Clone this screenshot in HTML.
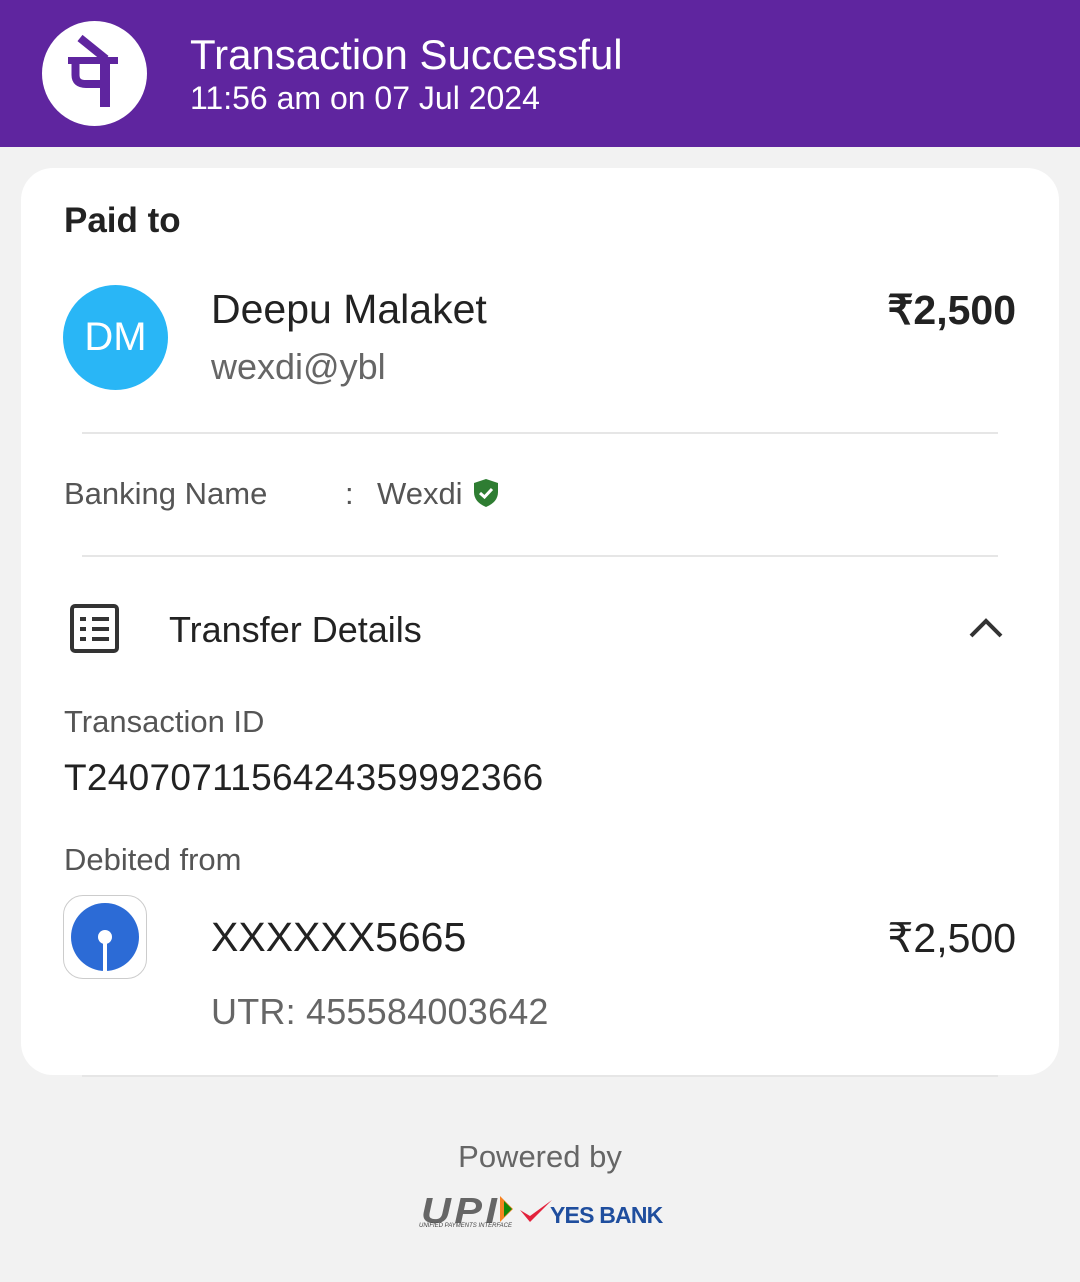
<!DOCTYPE html>
<html><head><meta charset="utf-8"><style>
body{margin:0;width:1080px;height:1282px;background:#f2f2f2;font-family:"Liberation Sans",sans-serif;position:relative;overflow:hidden}
.a{position:absolute;white-space:nowrap}
</style></head><body>
<div class="a" style="left:0;top:0;width:1080px;height:147px;background:#5f259f"></div>
<div class="a" style="left:42px;top:21px;width:105px;height:105px;border-radius:50%;background:#fff"></div>
<svg class="a" style="left:42px;top:21px" width="105" height="105" viewBox="0 0 105 105">
<path d="M38 17 L64 38" stroke="#5f259f" stroke-width="8" fill="none"/>
<rect x="26" y="36" width="50" height="7" fill="#5f259f"/>
<path d="M33.5 42 V54 Q33.5 63 44 63 H62" stroke="#5f259f" stroke-width="8" fill="none"/>
<rect x="58" y="40" width="10" height="46" fill="#5f259f"/>
</svg>
<div class="a" style="left:190px;top:31px;font-size:42px;color:#fff">Transaction Successful</div>
<div class="a" style="left:190px;top:80px;font-size:32px;color:#fff">11:56 am on 07 Jul 2024</div>

<div class="a" style="left:21px;top:168px;width:1038px;height:907px;background:#fff;border-radius:32px"></div>
<div class="a" style="left:64px;top:201px;font-size:35px;font-weight:bold;color:#222">Paid to</div>
<div class="a" style="left:63px;top:285px;width:105px;height:105px;border-radius:50%;background:#29b6f6;color:#fff;font-size:40px;line-height:105px;text-align:center">DM</div>
<div class="a" style="left:211px;top:286px;font-size:41px;color:#222">Deepu Malaket</div>
<div class="a" style="left:211px;top:346px;font-size:36px;color:#666">wexdi@ybl</div>
<div class="a" style="right:64px;top:286px;font-size:41px;font-weight:bold;color:#222">₹2,500</div>
<div class="a" style="left:82px;top:432px;width:916px;height:2px;background:#e6e6e6"></div>
<div class="a" style="left:64px;top:476px;font-size:31px;color:#555">Banking Name</div>
<div class="a" style="left:345px;top:476px;font-size:31px;color:#555">:</div>
<div class="a" style="left:377px;top:476px;font-size:31px;color:#555">Wexdi</div>
<svg class="a" style="left:472px;top:478px" width="28" height="30" viewBox="0 0 28 30"><path d="M14 1 L26 5 V14 Q26 24 14 29 Q2 24 2 14 V5 Z" fill="#2e7d32"/><path d="M8 15 L12.5 19 L20 11" stroke="#fff" stroke-width="3" fill="none"/></svg>
<div class="a" style="left:82px;top:555px;width:916px;height:2px;background:#e6e6e6"></div>
<svg class="a" style="left:70px;top:604px" width="49" height="49" viewBox="0 0 49 49"><rect x="2" y="2" width="45" height="45" rx="3" fill="none" stroke="#333" stroke-width="4"/><g fill="#333"><rect x="10" y="13" width="6" height="4"/><rect x="22" y="13" width="17" height="4"/><rect x="10" y="23" width="6" height="4"/><rect x="22" y="23" width="17" height="4"/><rect x="10" y="33" width="6" height="4"/><rect x="22" y="33" width="17" height="4"/></g></svg>
<div class="a" style="left:169px;top:609px;font-size:36px;color:#222">Transfer Details</div>
<svg class="a" style="left:968px;top:616px" width="36" height="24" viewBox="0 0 36 24"><path d="M3 20 L18 5 L33 20" stroke="#333" stroke-width="4" fill="none"/></svg>
<div class="a" style="left:64px;top:704px;font-size:31px;color:#555">Transaction ID</div>
<div class="a" style="left:64px;top:757px;font-size:37px;color:#222;letter-spacing:0.3px">T2407071156424359992366</div>
<div class="a" style="left:64px;top:842px;font-size:31px;color:#555">Debited from</div>
<div class="a" style="left:63px;top:895px;width:82px;height:82px;border:1px solid #ccc;border-radius:20px;background:#fff"></div>
<svg class="a" style="left:69px;top:901px" width="72" height="72" viewBox="0 0 72 72"><circle cx="36" cy="36" r="34" fill="#2c6bd6"/><circle cx="36" cy="36" r="7" fill="#fff"/><rect x="34" y="38" width="4" height="34" fill="#fff"/></svg>
<div class="a" style="left:211px;top:914px;font-size:41px;color:#222">XXXXXX5665</div>
<div class="a" style="right:64px;top:914px;font-size:41px;color:#222">₹2,500</div>
<div class="a" style="left:211px;top:991px;font-size:36px;color:#666;letter-spacing:0.2px">UTR: 455584003642</div>
<div class="a" style="left:82px;top:1075px;width:916px;height:2px;background:#e6e6e6"></div>
<div class="a" style="left:0;width:1080px;text-align:center;top:1139px;font-size:31px;color:#666">Powered by</div>
<div class="a" style="left:421px;top:1190px;font-size:36px;font-style:italic;font-weight:bold;color:#666;letter-spacing:3px;transform:scaleX(1.15);transform-origin:left">UPI</div>
<svg class="a" style="left:498px;top:1196px" width="16" height="26" viewBox="0 0 16 26"><path d="M2 0 L15 13 L2 26Z" fill="#f58220"/><path d="M6 5 L14 13 L6 21Z" fill="#138808"/></svg>
<div class="a" style="left:419px;top:1223px;font-size:6px;font-style:italic;color:#444">UNIFIED PAYMENTS INTERFACE</div>
<svg class="a" style="left:518px;top:1198px" width="36" height="28" viewBox="0 0 36 28"><path d="M2 12 L12 24 L34 2 L12 18Z" fill="#e3223c"/></svg>
<div class="a" style="left:550px;top:1202px;font-size:23px;font-weight:bold;color:#1f4e9e;letter-spacing:-0.8px">YES BANK</div>
</body></html>
